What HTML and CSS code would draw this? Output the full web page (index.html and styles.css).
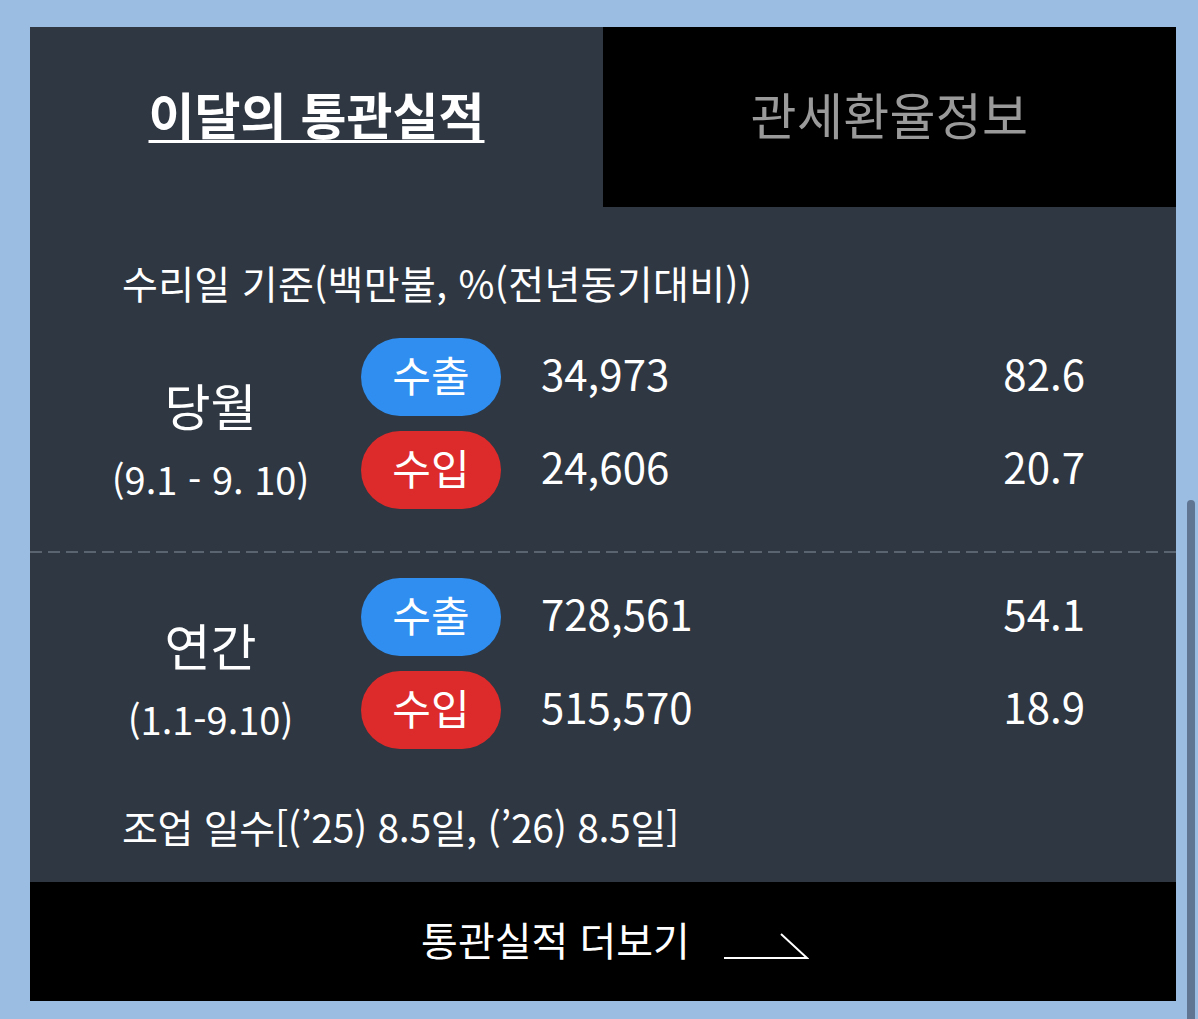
FILE: index.html
```html
<!DOCTYPE html>
<html lang="ko">
<head>
<meta charset="utf-8">
<title>이달의 통관실적</title>
<link rel="stylesheet" href="styles.css">
</head>
<body>
<div class="panel">
  <div class="tabs">
    <div class="tab tab-active"><span class="tab-label">이달의 통관실적</span></div>
    <div class="tab tab-inactive"><span class="tab-label">관세환율정보</span></div>
  </div>
  <div class="caption">수리일 기준(백만불, %(전년동기대비))</div>
  <div class="section section-month">
    <div class="period">
      <div class="period-name">당월</div>
      <div class="period-range">(9.1 - 9. 10)</div>
    </div>
    <div class="rows">
      <div class="row">
        <span class="badge badge-export">수출</span>
        <span class="amount">34,973</span>
        <span class="rate">82.6</span>
      </div>
      <div class="row">
        <span class="badge badge-import">수입</span>
        <span class="amount">24,606</span>
        <span class="rate">20.7</span>
      </div>
    </div>
  </div>
  <div class="divider"></div>
  <div class="section section-year">
    <div class="period">
      <div class="period-name">연간</div>
      <div class="period-range">(1.1-9.10)</div>
    </div>
    <div class="rows">
      <div class="row">
        <span class="badge badge-export">수출</span>
        <span class="amount">728,561</span>
        <span class="rate">54.1</span>
      </div>
      <div class="row">
        <span class="badge badge-import">수입</span>
        <span class="amount">515,570</span>
        <span class="rate">18.9</span>
      </div>
    </div>
  </div>
  <div class="note">조업 일수[(’25) 8.5일, (’26) 8.5일]</div>
  <a class="more" href="#">
    <span class="more-label">통관실적 더보기</span>
    <svg class="more-arrow" width="86" height="28" viewBox="0 0 86 28" aria-hidden="true">
      <path d="M1 25 H84 L58 1" fill="none" stroke="#ffffff" stroke-width="2"/>
    </svg>
  </a>
</div>
<div class="scrollbar"></div>
</body>
</html>
```

FILE: styles.css
```css
html, body {
  margin: 0;
  padding: 0;
}
body {
  background: #9bbde2;
  font-family: "Noto Sans CJK KR", "Noto Sans", sans-serif;
  color: #ffffff;
  padding: 27px 0 18px 30px;
  min-height: 1019px;
  box-sizing: border-box;
}
.panel {
  width: 1146px;
  background: #2e3742;
}
.tabs {
  display: grid;
  grid-template-columns: 573px 573px;
  height: 180px;
}
.tab {
  display: flex;
  align-items: center;
  justify-content: center;
  padding-bottom: 8px;
  box-sizing: border-box;
}
.tab-label {
  font-size: 50px;
  line-height: 60px;
  letter-spacing: 0;
}
.tab-active .tab-label {
  font-weight: 700;
  color: #ffffff;
  text-decoration: underline;
  text-decoration-thickness: 3px;
  text-underline-offset: 5px;
}
.tab-inactive {
  background: #000000;
}
.tab-inactive .tab-label {
  color: #9a9a9a;
  font-weight: 400;
  letter-spacing: 0.3px;
}
.caption {
  margin: 52px 0 0 92px;
  font-size: 39px;
  line-height: 46px;
  letter-spacing: 0.3px;
  color: #ffffff;
}
.section {
  display: grid;
  grid-template-columns: 331px 1fr;
}
.section-month {
  margin-top: 33px;
  padding-bottom: 42px;
}
.divider {
  height: 2px;
  background-image: repeating-linear-gradient(90deg, #5a6470 0, #5a6470 12px, transparent 12px, transparent 18px);
}
.section-year {
  padding-top: 25px;
}
.period {
  padding: 38px 0 0 30px;
  display: flex;
  flex-direction: column;
  align-items: center;
  gap: 24px;
}
.period-name {
  font-size: 50px;
  line-height: 56px;
}
.period-range {
  font-size: 38px;
  line-height: 46px;
  letter-spacing: 0;
}
.rows {
  display: flex;
  flex-direction: column;
  gap: 15px;
}
.row {
  display: flex;
  align-items: center;
  height: 78px;
  padding-right: 91px;
}
.badge {
  width: 140px;
  height: 78px;
  border-radius: 39px;
  display: flex;
  align-items: center;
  justify-content: center;
  font-size: 42px;
  line-height: 1;
  padding-bottom: 7px;
  box-sizing: border-box;
  flex: none;
}
.badge-export {
  background: #2f8ef0;
}
.badge-import {
  background: #dd2b2b;
}
.amount {
  margin-left: 40px;
  font-size: 42px;
  line-height: 1;
  letter-spacing: 0;
  padding-bottom: 8px;
}
.rate {
  margin-left: auto;
  font-size: 42px;
  line-height: 1;
  letter-spacing: 0;
  padding-bottom: 8px;
}
.note {
  margin: 54px 0 0 92px;
  padding-bottom: 33px;
  font-size: 39px;
  line-height: 46px;
  letter-spacing: -0.3px;
}
.more {
  display: flex;
  align-items: center;
  justify-content: center;
  height: 119px;
  background: #000000;
  color: #ffffff;
  text-decoration: none;
  gap: 33px;
  padding-left: 24px;
}
.more-label {
  font-size: 40px;
  line-height: 48px;
  letter-spacing: 0;
  padding-bottom: 6px;
}
.more-arrow {
  display: block;
  margin-top: 10px;
}
.scrollbar {
  position: fixed;
  left: 1187px;
  top: 500px;
  width: 8px;
  bottom: 0;
  background: #5f7592;
  border-radius: 4px 4px 0 0;
}
```
